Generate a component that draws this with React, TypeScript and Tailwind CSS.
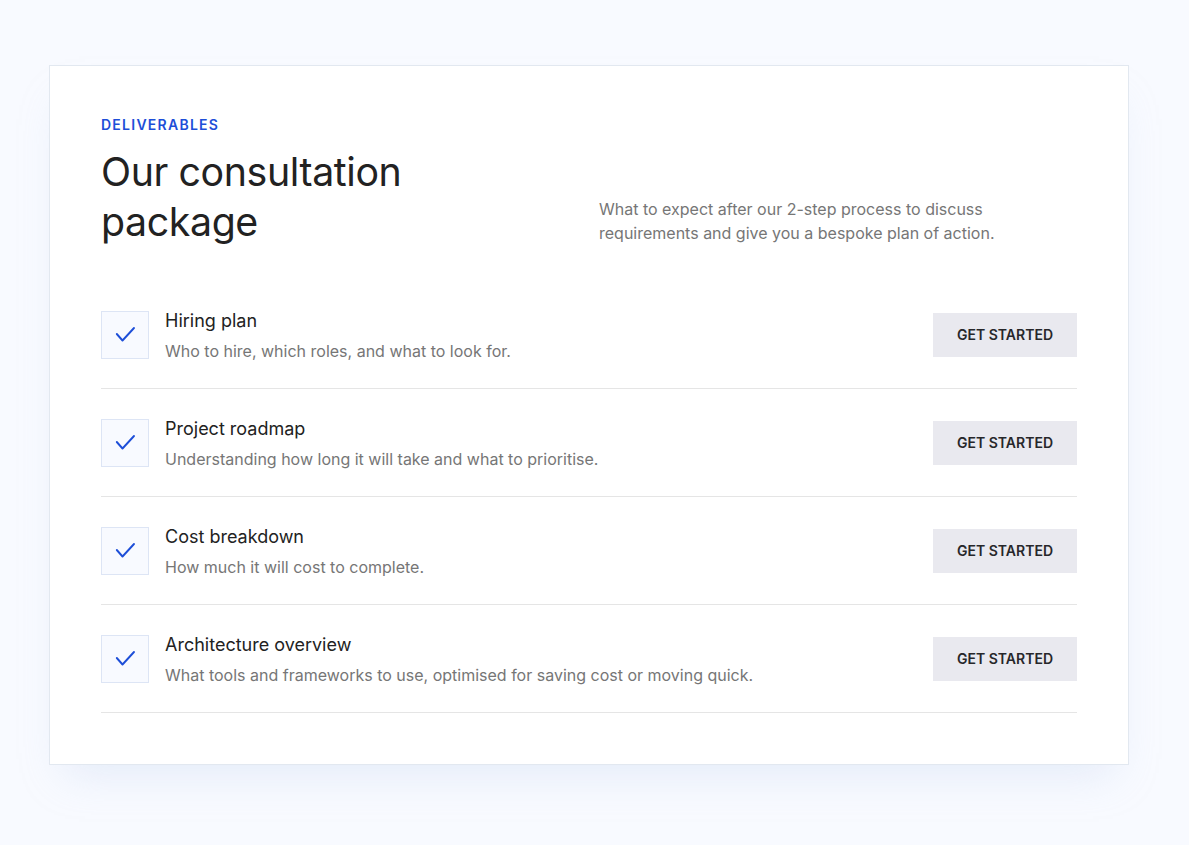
import React from "react";

const items = [
  { title: "Hiring plan", desc: "Who to hire, which roles, and what to look for." },
  { title: "Project roadmap", desc: "Understanding how long it will take and what to prioritise." },
  { title: "Cost breakdown", desc: "How much it will cost to complete." },
  { title: "Architecture overview", desc: "What tools and frameworks to use, optimised for saving cost or moving quick." },
];

function Check() {
  return (
    <svg width="24" height="24" viewBox="0 0 24 24" fill="none">
      <path d="M3.8 11 L9.5 17.5 L21 5" stroke="#1d4ed8" strokeWidth="1.9" strokeLinecap="round" strokeLinejoin="round" />
    </svg>
  );
}

export default function App() {
  return (
    <div className="min-h-[845px] w-full bg-[#f8faff] pt-[65px] pl-[49px]" style={{ fontFamily: "Inter, 'Liberation Sans', sans-serif" }}>
      <div className="w-[1080px] border border-[#e2e8f0] bg-white px-[51px] pt-[49px] pb-[51px] shadow-[0_24px_40px_-16px_rgba(190,205,235,0.35)]">
        <div className="grid grid-cols-2 gap-5 items-end">
          <div>
            <div className="text-sm leading-5 font-semibold tracking-[0.09em] text-[#1d4ed8]">DELIVERABLES</div>
            <h1 className="mt-3 text-[39.3px] leading-[50px] font-normal tracking-[-0.01em] text-[#222222]">
              Our consultation
              <br />
              package
            </h1>
          </div>
          <p className="text-base leading-6 text-[#767676] pb-[2px]">
            What to expect after our 2-step process to discuss requirements and give you a bespoke plan of action.
          </p>
        </div>
        <div className="mt-[34px]">
          {items.map((it) => (
            <div key={it.title} className="flex items-center border-b border-[#e5e5e5] pt-[26px] pb-[25px]">
              <div className="flex h-12 w-12 shrink-0 items-center justify-center border border-[#dde5f5] bg-[#f8faff]">
                <Check />
              </div>
              <div className="ml-4 flex-1">
                <div className="text-lg leading-7 text-[#222222]">{it.title}</div>
                <div className="mt-1 text-base leading-6 text-[#767676]">{it.desc}</div>
              </div>
              <button className="h-11 w-36 bg-[#e9e9ef] text-sm font-semibold text-[#27272a]">GET STARTED</button>
            </div>
          ))}
        </div>
      </div>
    </div>
  );
}
